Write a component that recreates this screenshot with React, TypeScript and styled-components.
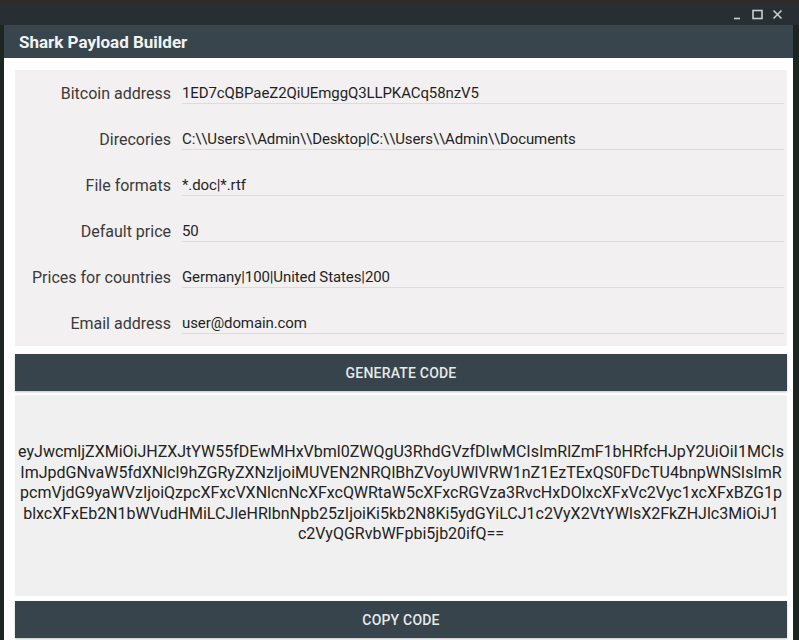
import React from 'react'
import styled, { createGlobalStyle } from 'styled-components'

const GlobalStyle = createGlobalStyle`
    html, body {
        margin: 0;
        padding: 0;
        background: #1d2521;
    }

    * {
        box-sizing: border-box;
    }
`

const Screen = styled.div`
    display: flex;
    flex-direction: column;

    width: 799px;
    height: 640px;
    overflow: hidden;

    font-family: Roboto, "Liberation Sans", Arial, sans-serif;

    background: #1d2521;
    border-top: 3px solid #2f2b28;
`

const WindowBar = styled.div`
    display: flex;
    align-items: center;
    justify-content: flex-end;
    gap: 9px;

    height: 22px;
    padding-right: 16px;

    background: #282f34;
`

const ControlIcon = styled.svg`
    display: block;
    width: 11px;
    height: 11px;

    stroke: #c9ced1;
    stroke-width: 1.6;
    fill: none;
`

const Window = styled.div`
    display: flex;
    flex: 1;
    flex-direction: column;

    margin: 0 6px 0 4px;

    background: #ffffff;
`

const TitleBar = styled.div`
    display: flex;
    align-items: center;

    height: 33px;
    padding-left: 15px;

    font-size: 17px;
    font-weight: 700;
    color: #f1f4f5;

    background: #38454d;
`

const Body = styled.div`
    display: flex;
    flex-direction: column;

    padding: 12px 6px 0 11px;
`

const FormPanel = styled.div`
    display: flex;
    flex-direction: column;

    background: #f2f0f1;
`

const Row = styled.div`
    display: grid;
    grid-template-columns: 156px 1fr;
    column-gap: 11px;
    align-items: end;

    height: 46px;
    padding: 0 3px 12px 0;
`

const Label = styled.div`
    font-size: 16px;
    line-height: 20px;
    text-align: right;
    color: #3a3a3a;
`

const Field = styled.div`
    height: 21px;

    font-size: 15px;
    line-height: 20px;
    letter-spacing: -0.1px;
    color: #1f1f1f;

    border-bottom: 1px solid #dddbdc;
    white-space: nowrap;
    overflow: hidden;
`

const ActionButton = styled.div<{ $top: number }>`
    display: flex;
    align-items: center;
    justify-content: center;

    height: 37px;
    margin-top: ${p => p.$top}px;

    font-size: 14px;
    font-weight: 500;
    letter-spacing: 0.2px;
    color: #e6e9eb;

    background: #37444c;
    box-shadow: 0 1px 2px rgba(0, 0, 0, 0.25);
`

const CodeArea = styled.div`
    display: flex;
    flex-direction: column;
    align-items: center;
    justify-content: center;

    height: 201px;
    margin-top: 4px;
    padding-bottom: 4px;

    font-size: 16px;
    line-height: 20.5px;
    color: #222222;

    background: #f0f0f0;
`

const CodeLine = styled.div`
    white-space: nowrap;
`

const fields = [
    ['Bitcoin address', '1ED7cQBPaeZ2QiUEmggQ3LLPKACq58nzV5'],
    ['Direcories', 'C:\\\\Users\\\\Admin\\\\Desktop|C:\\\\Users\\\\Admin\\\\Documents'],
    ['File formats', '*.doc|*.rtf'],
    ['Default price', '50'],
    ['Prices for countries', 'Germany|100|United States|200'],
    ['Email address', 'user@domain.com'],
]

const codeLines = [
    'eyJwcmljZXMiOiJHZXJtYW55fDEwMHxVbml0ZWQgU3RhdGVzfDIwMCIsImRlZmF1bHRfcHJpY2UiOiI1MCIs',
    'ImJpdGNvaW5fdXNlcl9hZGRyZXNzIjoiMUVEN2NRQlBhZVoyUWlVRW1nZ1EzTExQS0FDcTU4bnpWNSIsImR',
    'pcmVjdG9yaWVzIjoiQzpcXFxcVXNlcnNcXFxcQWRtaW5cXFxcRGVza3RvcHxDOlxcXFxVc2Vyc1xcXFxBZG1p',
    'blxcXFxEb2N1bWVudHMiLCJleHRlbnNpb25zIjoiKi5kb2N8Ki5ydGYiLCJ1c2VyX2VtYWlsX2FkZHJlc3MiOiJ1',
    'c2VyQGRvbWFpbi5jb20ifQ==',
]

export default function App() {
    return (
        <>
            <GlobalStyle />
            <Screen>
                <WindowBar>
                    <ControlIcon viewBox="0 0 11 11">
                        <path d="M2 9.5h6" />
                    </ControlIcon>
                    <ControlIcon viewBox="0 0 11 11">
                        <rect x="1" y="1.5" width="9" height="8" />
                    </ControlIcon>
                    <ControlIcon viewBox="0 0 11 11">
                        <path d="M1.5 1.5l8 8M9.5 1.5l-8 8" />
                    </ControlIcon>
                </WindowBar>
                <Window>
                    <TitleBar>Shark Payload Builder</TitleBar>
                    <Body>
                        <FormPanel>
                            {fields.map(([label, value]) => (
                                <Row key={label}>
                                    <Label>{label}</Label>
                                    <Field>{value}</Field>
                                </Row>
                            ))}
                        </FormPanel>
                        <ActionButton $top={8}>GENERATE CODE</ActionButton>
                        <CodeArea>
                            {codeLines.map(line => <CodeLine key={line}>{line}</CodeLine>)}
                        </CodeArea>
                        <ActionButton $top={5}>COPY CODE</ActionButton>
                    </Body>
                </Window>
            </Screen>
        </>
    )
}
